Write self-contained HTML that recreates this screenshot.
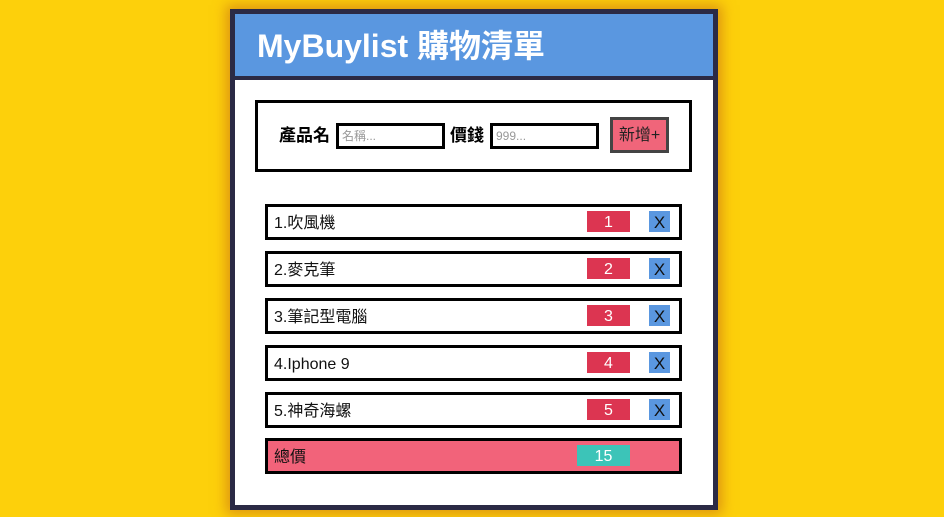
<!DOCTYPE html>
<html><head><meta charset="utf-8"><style>
body{margin:0;width:944px;height:517px;background:#fdd00b;font-family:"Liberation Sans","Noto Sans CJK TC",sans-serif;overflow:hidden;position:relative}
.card{position:absolute;left:230px;top:9px;width:478px;height:491px;border:5px solid #2b2a45;background:#fff;box-shadow:0 0 12px 4px rgba(200,110,20,.6)}
.hd{position:absolute;left:0;top:0;width:478px;height:62px;background:#5a97e0;border-bottom:4px solid #2b2a45}
.hd span{position:absolute;left:22px;top:12px;color:#fff;font-size:32px;font-weight:bold;line-height:40px}
.abs{position:absolute}
.form{left:20px;top:86px;width:431px;height:66px;border:3px solid #000}
.lbl{font-size:17px;font-weight:bold;line-height:20px}
.inp{border:3px solid #000;height:20px;background:#fff;font-size:12px;color:#999;line-height:20px;padding-left:3px;box-sizing:content-box}
.btn{left:375px;top:103px;width:53px;height:30px;border:3px solid #444;background:#f0657a;font-size:16px;line-height:32px;text-align:center;color:#222}
.row{left:30px;width:411px;height:30px;border:3px solid #000;background:#fff}
.row .t{position:absolute;left:6px;top:7px;font-size:16px;line-height:20px;color:#111}
.num{position:absolute;left:319px;top:4px;width:43px;height:21px;background:#dc3551;color:#fff;text-align:center;font-size:16px;line-height:23px}
.x{position:absolute;left:381px;top:4px;width:21px;height:21px;background:#5a97e0;color:#111;text-align:center;font-size:17px;line-height:23px}
</style></head><body>
<div class="card">
 <div class="hd"><span>MyBuylist 購物清單</span></div>
 <div class="abs form"></div>
 <div class="abs lbl" style="left:44px;top:112px">產品名</div>
 <div class="abs inp" style="left:101px;top:109px;width:100px">名稱...</div>
 <div class="abs lbl" style="left:215px;top:112px">價錢</div>
 <div class="abs inp" style="left:255px;top:109px;width:100px">999...</div>
 <div class="abs btn">新增+</div>
 <div class="abs row" style="top:190px"><span class="t">1.吹風機</span><span class="num">1</span><span class="x">X</span></div>
 <div class="abs row" style="top:237px"><span class="t">2.麥克筆</span><span class="num">2</span><span class="x">X</span></div>
 <div class="abs row" style="top:284px"><span class="t">3.筆記型電腦</span><span class="num">3</span><span class="x">X</span></div>
 <div class="abs row" style="top:331px"><span class="t">4.Iphone 9</span><span class="num">4</span><span class="x">X</span></div>
 <div class="abs row" style="top:378px"><span class="t">5.神奇海螺</span><span class="num">5</span><span class="x">X</span></div>
 <div class="abs row" style="top:424px;background:#f2637a"><span class="t">總價</span><span class="num" style="left:309px;width:53px;background:#3cc4b8">15</span></div>
</div>
</body></html>
